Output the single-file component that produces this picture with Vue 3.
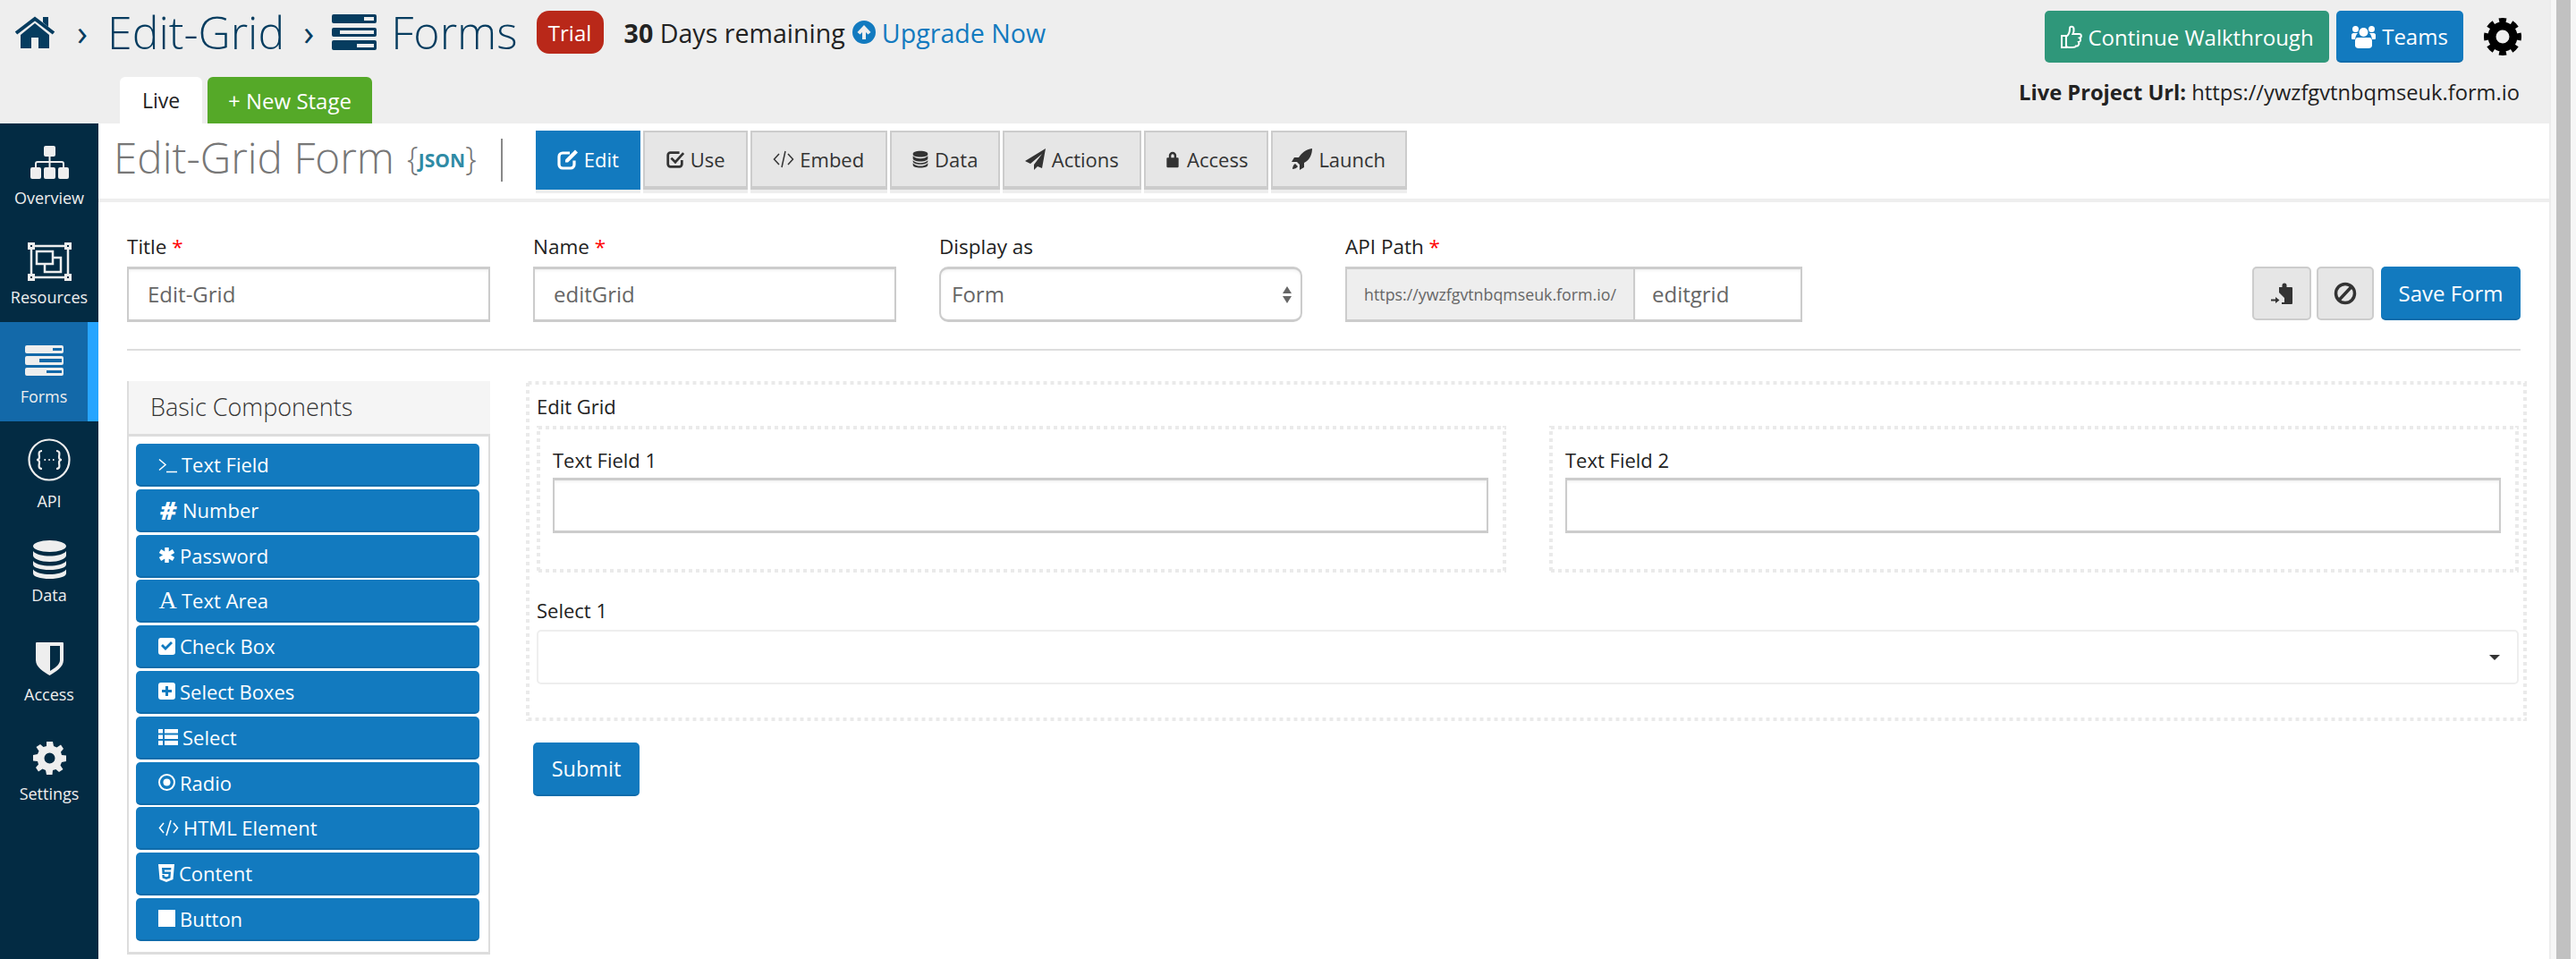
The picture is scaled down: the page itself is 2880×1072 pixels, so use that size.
<template>
  <div class="page">
    <div class="window">
      <header class="topbar">
        <div class="top-left">
          <div class="crumbs">
            <Icon name="home" :w="46" :h="36" />
            <span class="chev">›</span>
            <span class="crumb">Edit-Grid</span>
            <span class="chev second">›</span>
            <Icon name="server" :w="50" :h="40" />
            <span class="crumb forms">Forms</span>
            <span class="trial">Trial</span>
            <span class="remaining"><b>30</b> Days remaining</span>
            <Icon name="upcircle" :w="26" :h="26" class="up-icon" />
            <a class="upgrade">Upgrade Now</a>
          </div>
          <div class="stages">
            <span class="stage">Live</span>
            <span class="stage new">+ New Stage</span>
          </div>
        </div>
        <div class="top-right">
          <div class="top-actions">
            <button class="btn green"><Icon name="thumb" :w="25" :h="28" />Continue Walkthrough</button>
            <button class="btn blue teams"><Icon name="users" :w="27" :h="28" />Teams</button>
            <svg class="gear" viewBox="0 0 42 42" width="42" height="42">
              <circle cx="21" cy="21" r="12" fill="none" stroke="#000" stroke-width="9" />
              <circle cx="21" cy="21" r="18" fill="none" stroke="#000" stroke-width="6" pathLength="80" stroke-dasharray="5.5 4.5" transform="rotate(-12.4 21 21)" />
            </svg>
          </div>
          <div class="live-url"><b>Live Project Url:</b> https://ywzfgvtnbqmseuk.form.io</div>
        </div>
      </header>

      <div class="body">
        <nav class="sidebar">
          <a v-for="item in navItems" :key="item.label" class="nav-item" :class="{ active: item.label === 'Forms', api: item.label === 'API' }">
            <span class="nav-icon"><Icon :name="item.icon" :w="item.w" :h="item.h" /></span>
            <span class="nav-label">{{ item.label }}</span>
          </a>
        </nav>

        <main class="content">
          <div class="title-row">
            <h1 class="form-title">Edit-Grid Form</h1>
            <span class="json"><i>{</i>JSON<i>}</i></span>
            <span class="title-sep"></span>
            <div class="tabs">
              <a v-for="tab in tabs" :key="tab.label" class="tab" :class="{ active: tab.label === 'Edit' }">
                <Icon :name="tab.icon" :w="tab.w" :h="24" />{{ tab.label }}
              </a>
            </div>
          </div>

          <div class="settings">
            <div class="field">
              <label>Title <em>*</em></label>
              <div class="input">Edit-Grid</div>
            </div>
            <div class="field">
              <label>Name <em>*</em></label>
              <div class="input">editGrid</div>
            </div>
            <div class="field">
              <label>Display as</label>
              <div class="input select-native">
                Form
                <span class="updown"><i></i><i></i></span>
              </div>
            </div>
            <div class="field api-field">
              <label>API Path <em>*</em></label>
              <div class="input-group">
                <span class="addon">https://ywzfgvtnbqmseuk.form.io/</span>
                <span class="input">editgrid</span>
              </div>
            </div>
            <div class="settings-actions">
              <button class="btn grey first"><Icon name="clipin" :w="24" :h="24" /></button>
              <button class="btn grey second"><Icon name="ban" :w="26" :h="26" /></button>
              <button class="btn blue save">Save Form</button>
            </div>
          </div>

          <div class="builder">
            <aside class="panel">
              <div class="panel-head">Basic Components</div>
              <div class="panel-list">
                <a v-for="c in components" :key="c.label" class="comp">
                  <span v-if="c.glyph" class="glyph" :class="c.glyph">{{ c.text }}</span>
                  <Icon v-else :name="c.icon" :w="c.w || 19" :h="c.h || 19" />
                  {{ c.label }}
                </a>
              </div>
            </aside>

            <section class="canvas">
              <div class="dashed grid-box">
                <div class="lbl">Edit Grid</div>
                <div class="cols">
                  <div v-for="n in 2" :key="n" class="dashed col">
                    <div class="lbl">Text Field {{ n }}</div>
                    <div class="input blank"></div>
                  </div>
                </div>
                <div class="lbl select-lbl">Select 1</div>
                <div class="choice"><span class="caret"></span></div>
              </div>
              <button class="btn blue submit">Submit</button>
            </section>
          </div>
        </main>
      </div>
    </div>
    <div class="scrollbar"><span></span></div>
  </div>
</template>

<script setup>
import { h } from 'vue'

// icon shapes, f = filled path, s = stroked path
const shapes = {
  home: { vb: '0 0 46 36', f: 'M7 21 23 8 39 21V36H27V24H19V36H7ZM32 1h6v11l-6-5Z', s: 'M2 19 23 3 44 19', sw: 4 },
  server: { vb: '0 0 50 40', f: 'M2 0H48a2 2 0 0 1 2 2V8a2 2 0 0 1-2 2H2a2 2 0 0 1-2-2V2a2 2 0 0 1 2-2ZM36 3V7H47V3ZM2 15H48a2 2 0 0 1 2 2V23a2 2 0 0 1-2 2H2a2 2 0 0 1-2-2V17a2 2 0 0 1 2-2ZM9 18V22H47V18ZM2 29H48a2 2 0 0 1 2 2V38a2 2 0 0 1-2 2H2a2 2 0 0 1-2-2V31a2 2 0 0 1 2-2ZM28 33V37H47V33Z' },
  sitemap: { vb: '0 0 43 37', f: 'M17 0H26a2 2 0 0 1 2 2V10a2 2 0 0 1-2 2H17a2 2 0 0 1-2-2V2a2 2 0 0 1 2-2ZM2 24H10a2 2 0 0 1 2 2V35a2 2 0 0 1-2 2H2a2 2 0 0 1-2-2V26a2 2 0 0 1 2-2ZM17 24H26a2 2 0 0 1 2 2V35a2 2 0 0 1-2 2H17a2 2 0 0 1-2-2V26a2 2 0 0 1 2-2ZM33 24H41a2 2 0 0 1 2 2V35a2 2 0 0 1-2 2H33a2 2 0 0 1-2-2V26a2 2 0 0 1 2-2Z', s: 'M21.500 12V24M6 24V20a2 2 0 0 1 2-2H35a2 2 0 0 1 2 2V24', sw: 2 },
  resources: { vb: '0 0 49 43', f: 'M0 0H8V8H0ZM3 3V5H5V3ZM41 0H49V8H41ZM44 3V5H46V3ZM0 35H8V43H0ZM3 38V40H5V38ZM41 35H49V43H41ZM44 38V40H46V38Z', s: 'M8 4H41M4 8V35M45 8V35M8 39H41M10 10H28V24H10ZM28 17H37V33H19V24', sw: 2.500 },
  forms: { vb: '0 0 43 34', f: 'M2 0H41a2 2 0 0 1 2 2V7a2 2 0 0 1-2 2H2a2 2 0 0 1-2-2V2a2 2 0 0 1 2-2ZM31 3V6H41V3ZM2 12H41a2 2 0 0 1 2 2V20a2 2 0 0 1-2 2H2a2 2 0 0 1-2-2V14a2 2 0 0 1 2-2ZM16 15V19H41V15ZM2 25H41a2 2 0 0 1 2 2V32a2 2 0 0 1-2 2H2a2 2 0 0 1-2-2V27a2 2 0 0 1 2-2ZM24 28V31H41V28Z' },
  api: { vb: '0 0 48 48', s: 'M24 1.500a22.500 22.500 0 1 0 0 45a22.500 22.500 0 1 0 0-45ZM16 14c-5 0-3 5-3 7s-1 3-3 3c2 0 3 1 3 3s-2 7 3 7M32 14c5 0 3 5 3 7s1 3 3 3c-2 0-3 1-3 3s2 7-3 7M18.500 24h1.500M23.300 24h1.500M28 24h1.500', sw: 2.200 },
  data: { vb: '0 0 37 43', f: 'M18.500 0C29 0 37 3 37 6.500S29 13 18.500 13 0 10 0 6.500 8 0 18.500 0ZM0 12C3 16 11 17.500 18.500 17.500S34 16 37 12V17C37 20.500 29 24 18.500 24S0 20.500 0 17ZM0 23C3 27 11 28.500 18.500 28.500S34 27 37 23V27C37 30.500 29 33 18.500 33S0 30.500 0 27ZM0 32.500C3 36.500 11 38 18.500 38S34 36.500 37 32.500V37C37 40.500 29 43 18.500 43S0 40.500 0 37Z' },
  shield: { vb: '0 0 31 37', f: 'M1 0H30a1 1 0 0 1 1 1V20C31 28 22 33 15.500 37 9 33 0 28 0 20V1a1 1 0 0 1 1-1ZM16 4V32C21 29 27 25 27 20V4Z' },
  cog: { vb: '0 0 37 37', f: 'M15 0H22L23 5 26.500 6.500 31 3.500 34 8 31 11.500 32 15 37 15.500V22L32 23 30.500 26.500 33.500 31 29 34 25.500 31 22 32 21.500 37H15L14 32 10.500 30.500 6 33.500 3 29 6 25.500 5 22 0 21.500V15L5 14 6.500 10.500 3.500 6 8 3 11.500 6 15 5ZM18.500 12.500a6 6 0 1 0 0 12a6 6 0 1 0 0-12Z' },
  upcircle: { vb: '0 0 26 26', f: 'M13 0a13 13 0 1 1 0 26a13 13 0 1 1 0-26ZM13 5 5.500 13 8.500 15.500 11 13V21H15V13L17.500 15.500 20.500 13Z' },
  thumb: { vb: '0 0 25 28', s: 'M2 13H7V26H2ZM7 14C10 12 11 9 11 5 11 2 15 2 15.500 5 16 8 15 10 14.500 11H21.500C24.500 11 24.500 15 22 15.500 24 17 23 20 21 20 22 22 20.500 25 18 24.500 17.500 26 15 26 13 26H10C9 26 8 25.500 7 25', sw: 2 },
  users: { vb: '0 0 27 28', f: 'M13.500 5a5 5 0 1 1 0 10a5 5 0 1 1 0-10ZM4.500 3a3.500 3.500 0 1 1 0 7a3.500 3.500 0 1 1 0-7ZM22.500 3a3.500 3.500 0 1 1 0 7a3.500 3.500 0 1 1 0-7ZM7 16H20C22 16 23 18 23 20V25C23 27 21 28 19 28H8C6 28 4 27 4 25V20C4 18 5 16 7 16ZM2 11H7C5 13 4.500 15 4 18H1C0 18 0 17 0 16V13C0 12 1 11 2 11ZM20 11H25C26 11 27 12 27 13V16C27 17 27 18 26 18H23C22.500 15 22 13 20 11Z' },
  edit: { vb: '0 0 24 24', f: 'M9 12.500 20 1.500l3 3L12 15.500H9Z', s: 'M19 13.500V18a4 4 0 0 1-4 4H6a4 4 0 0 1-4-4V9A4 4 0 0 1 6 5H14', sw: 3.200 },
  check: { vb: '0 0 24 24', s: 'M20 13V18a3 3 0 0 1-3 3H6a3 3 0 0 1-3-3V7a3 3 0 0 1 3-3H17M7 10.500 12 15.500 22 4.500', sw: 3 },
  code: { vb: '0 0 24 24', s: 'M7 6 1.500 12 7 18M17 6l5.500 6L17 18M14 3 10 21', sw: 1.500 },
  database: { vb: '0 0 24 24', f: 'M12 1C18 1 22 2.500 22 5S18 9 12 9 2 7.500 2 5 6 1 12 1ZM2 7.500C4 10 8 11 12 11S20 10 22 7.500V11C22 13 18 15 12 15S2 13 2 11ZM2 13.500C4 16 8 17 12 17S20 16 22 13.500V15C22 17 18 19 12 19S2 17 2 15ZM2 17C4 20 8 21 12 21S20 20 22 17V19.500C22 22 18 23.500 12 23.500S2 22 2 19.500Z' },
  plane: { vb: '0 0 24 24', f: 'M23 0 0 14l6 3L19 6 10 18v6l4-4 5 2Z' },
  lock: { vb: '0 0 24 24', f: 'M5 10h14a1 1 0 0 1 1 1V22a1 1 0 0 1-1 1H5a1 1 0 0 1-1-1V11a1 1 0 0 1 1-1ZM7 10V7a5 5 0 0 1 10 0v3h-3V7a2 2 0 0 0-4 0v3Z' },
  rocket: { vb: '0 0 24 24', f: 'M23 0C16 1 11 5 8 10H3L0 15H6L9 18V24L14 21V16C20 13 23 7 23 0ZM4 17C2 18 1 21 1 23 3 23 6 22 7 20Z' },
  clipin: { vb: '0 0 24 24', f: 'M9 5H12.500V3a2.500 2.500 0 0 1 5 0V5H23a1 1 0 0 1 1 1V23a1 1 0 0 1-1 1H12V22H15V17L9 11ZM0 18.500H5V16L9.500 19.500 5 23V20.500H0Z' },
  ban: { vb: '0 0 26 26', s: 'M13 2.500a10.500 10.500 0 1 0 0 21a10.500 10.500 0 1 0 0-21ZM6 20.500 20 5.500', sw: 3.500 },
  terminal: { vb: '0 0 21 19', s: 'M1 3.500 8 9.500 1 15.500M9 17.500H21', sw: 1.500 },
  asterisk: { vb: '0 0 19 19', s: 'M9.500 1V18M2 5l15 9M17 5 2 14', sw: 4.500 },
  checkbox: { vb: '0 0 19 19', f: 'M3 0H16a3 3 0 0 1 3 3V16a3 3 0 0 1-3 3H3a3 3 0 0 1-3-3V3a3 3 0 0 1 3-3ZM8 14 16 6 14 4 8 10 5 7 3 9Z' },
  plusbox: { vb: '0 0 19 19', f: 'M3 0H16a3 3 0 0 1 3 3V16a3 3 0 0 1-3 3H3a3 3 0 0 1-3-3V3a3 3 0 0 1 3-3ZM8 4V8H4V11H8V15H11V11H15V8H11V4Z' },
  list: { vb: '0 0 22 18', f: 'M0 0H5V4.500H0ZM7 0H22V4.500H7ZM0 6.500H5V11H0ZM7 6.500H22V11H7ZM0 13H5V18H0ZM7 13H22V18H7Z' },
  radio: { vb: '0 0 19 19', f: 'M9.500 5.500a4 4 0 1 1 0 8a4 4 0 1 1 0-8Z', s: 'M9.500 1a8.500 8.500 0 1 0 0 17a8.500 8.500 0 1 0 0-17Z', sw: 2 },
  html: { vb: '0 0 18 20', f: 'M0 0H18L16.500 17 9 20 1.500 17ZM4 4 4.500 11H11.500L11.200 13.500 9 14.200 6.800 13.500 6.700 12H4.300L4.600 15.500 9 17 13.400 15.500 14 8.500H7L6.800 6.500H14.200L14.400 4Z' },
  stop: { vb: '0 0 19 19', f: 'M0 0H19V19H0Z' },
  tagcode: { vb: '0 0 23 19', s: 'M6 4 1.500 9.500 6 15M17 4l4.500 5.500L17 15M14 1 9 18', sw: 1.600 }
}

const Icon = (props) => {
  const s = shapes[props.name]
  const kids = []
  if (s.f) kids.push(h('path', { d: s.f, fill: 'currentColor', 'fill-rule': 'evenodd' }))
  if (s.s) kids.push(h('path', { d: s.s, fill: 'none', stroke: 'currentColor', 'stroke-width': s.sw }))
  return h('svg', { viewBox: s.vb, width: props.w, height: props.h, style: 'flex:none' }, kids)
}
Icon.props = ['name', 'w', 'h']

const navItems = [
  { label: 'Overview', icon: 'sitemap', w: 43, h: 37 },
  { label: 'Resources', icon: 'resources', w: 49, h: 43 },
  { label: 'Forms', icon: 'forms', w: 43, h: 34 },
  { label: 'API', icon: 'api', w: 48, h: 48 },
  { label: 'Data', icon: 'data', w: 37, h: 43 },
  { label: 'Access', icon: 'shield', w: 31, h: 37 },
  { label: 'Settings', icon: 'cog', w: 37, h: 37 }
]

const tabs = [
  { label: 'Edit', icon: 'edit', w: 24 },
  { label: 'Use', icon: 'check', w: 22 },
  { label: 'Embed', icon: 'code', w: 24 },
  { label: 'Data', icon: 'database', w: 20 },
  { label: 'Actions', icon: 'plane', w: 24 },
  { label: 'Access', icon: 'lock', w: 20 },
  { label: 'Launch', icon: 'rocket', w: 24 }
]

const components = [
  { label: 'Text Field', icon: 'terminal', w: 21 },
  { label: 'Number', glyph: 'hash', text: '#' },
  { label: 'Password', icon: 'asterisk' },
  { label: 'Text Area', glyph: 'serif', text: 'A' },
  { label: 'Check Box', icon: 'checkbox' },
  { label: 'Select Boxes', icon: 'plusbox' },
  { label: 'Select', icon: 'list', w: 22, h: 18 },
  { label: 'Radio', icon: 'radio' },
  { label: 'HTML Element', icon: 'tagcode', w: 23 },
  { label: 'Content', icon: 'html', w: 18, h: 20 },
  { label: 'Button', icon: 'stop' }
]
</script>

<style>
html, body { margin: 0; background: #fff; }
</style>

<style scoped>
.page {
  width: 2880px;
  height: 1072px;
  display: flex;
  overflow: hidden;
  font-family: "Open Sans", "Liberation Sans", sans-serif;
  color: #222;
}
.window {
  width: 2850px;
  display: flex;
  flex-direction: column;
}
.scrollbar {
  width: 30px;
  box-sizing: border-box;
  background: #f6f6f6;
  border-left: 2px solid #ececec;
  padding-left: 6px;
}
.scrollbar span {
  display: block;
  width: 16px;
  height: 100%;
  background: #c1c1c1;
}

.topbar {
  height: 138px;
  background: #eee;
  display: flex;
  justify-content: space-between;
  flex: none;
}
.top-left {
  display: flex;
  flex-direction: column;
}
.crumbs {
  height: 86px;
  padding-left: 16px;
  box-sizing: border-box;
  padding-bottom: 14px;
  display: flex;
  align-items: center;
  color: #063c5f;
}
.chev {
  font-size: 40px;
  margin: 0 22px 0 24px;
  line-height: 1;
}
.chev.second {
  margin: 0 20px 0 21px;
}
.crumb {
  font-size: 50px;
  font-weight: 350;
}
.crumb.forms {
  margin-left: 16px;
}
.trial {
  margin-left: 21px;
  width: 75px;
  height: 48px;
  background: #b92819;
  color: #fff;
  border-radius: 14px;
  font-size: 24px;
  font-weight: 500;
  display: flex;
  align-items: center;
  justify-content: center;
}
.remaining {
  margin-left: 23px;
  font-size: 28.600px;
  color: #222;
}
.up-icon {
  margin-left: 8px;
  color: #127abf;
}
.upgrade {
  margin-left: 7px;
  font-size: 28.600px;
  color: #127abf;
}
.stages {
  margin-left: 134px;
  display: flex;
  gap: 6px;
  height: 52px;
}
.stage {
  width: 92px;
  background: #fff;
  border-radius: 6px 6px 0 0;
  font-size: 23px;
  display: flex;
  align-items: center;
  justify-content: center;
  color: #222;
}
.stage.new {
  width: 184px;
  background: #55a928;
  color: #fff;
  font-size: 24px;
  font-weight: 500;
}

.top-right {
  padding: 12px 31px 0 0;
  display: flex;
  flex-direction: column;
  align-items: flex-end;
}
.top-actions {
  display: flex;
  align-items: center;
}
.btn {
  font-family: inherit;
  height: 58px;
  border: 0;
  border-radius: 5px;
  color: #fff;
  display: flex;
  align-items: center;
  justify-content: center;
  font-size: 24px;
  font-weight: 500;
  padding: 0;
}
.green {
  width: 318px;
  background: #2f977a;
  gap: 6px;
}
.blue {
  background: #127abf;
  border-bottom: 2px solid #0f6cab;
}
.teams {
  width: 142px;
  margin-left: 8px;
  gap: 7px;
}
.gear {
  margin-left: 23px;
}
.live-url {
  margin-top: 16px;
  margin-right: 2px;
  font-size: 23.700px;
  line-height: 34px;
  color: #222;
}

.body {
  flex: 1;
  display: flex;
  min-height: 0;
}
.sidebar {
  width: 110px;
  flex: none;
  background: #032b43;
}
.nav-item {
  display: flex;
  flex-direction: column;
  align-items: center;
  height: 111px;
  box-sizing: border-box;
  padding-top: 20px;
  color: #eee;
}
.nav-item.active {
  background: #1369a9;
  border-right: 12px solid #27a5ff;
}
.nav-icon {
  height: 46px;
  display: flex;
  align-items: center;
}
.nav-label {
  margin-top: 5px;
  font-size: 18px;
  line-height: 24px;
  font-weight: 500;
}
.nav-item.api .nav-label {
  margin-top: 11px;
}

.content {
  flex: 1;
  min-width: 0;
}
.title-row {
  height: 84px;
  display: flex;
  border-bottom: 4px solid #eee;
  padding-left: 17px;
}
.form-title {
  margin: 6px 0 0;
  font-size: 47.700px;
  line-height: 64px;
  font-weight: 300;
  color: #777;
}
.json {
  margin: 17px 0 0 14px;
  font-size: 21px;
  line-height: 44px;
  font-weight: 700;
  color: #2f8ba5;
}
.json i {
  font-style: normal;
  font-weight: 300;
  font-size: 36px;
  color: #777;
  vertical-align: -3px;
}
.title-sep {
  width: 2px;
  height: 48px;
  margin: 17px 0 0 27px;
  background: #888;
}
.tabs {
  margin: 8px 0 0 37px;
  display: grid;
  grid-template-columns: 117px 117px 153px 123px 155px 139px 152px;
  gap: 3px;
  height: 70px;
}
.tab {
  height: 66px;
  box-sizing: border-box;
  background: #e6e6e6;
  border: 2px solid #ccc;
  border-bottom-width: 4px;
  box-shadow: 0 4px 0 #eee;
  font-size: 22px;
  color: #333;
  display: flex;
  align-items: center;
  justify-content: center;
  gap: 6px;
}
.tab.active {
  background: #127abf;
  border-color: #127abf;
  color: #fff;
  font-weight: 500;
}

.settings {
  margin: 0 32px 0 32px;
  padding: 35px 0 30px;
  border-bottom: 2px solid #ddd;
  display: flex;
  gap: 48px;
}
.field {
  width: 406px;
}
.api-field {
  width: 511px;
}
.field label {
  display: block;
  font-size: 22.500px;
  line-height: 30px;
  margin-bottom: 7px;
  color: #222;
}
.field em {
  color: #f00;
  font-style: normal;
}
.input {
  height: 62px;
  box-sizing: border-box;
  border: 3px solid #ccc;
  border-width: 3px 2px;
  background: #fff;
  padding: 0 21px;
  font-size: 24px;
  line-height: 56px;
  color: #666;
  box-shadow: inset 0 2px 3px rgba(0, 0, 0, 0.05);
}
.select-native {
  border-radius: 10px;
  display: flex;
  align-items: center;
  justify-content: space-between;
  padding: 0 10px 0 12px;
}
.updown {
  display: flex;
  flex-direction: column;
  gap: 3px;
}
.updown i {
  width: 0;
  height: 0;
  border: 5px solid transparent;
  border-bottom: 8px solid #666;
  border-top: 0;
}
.updown i + i {
  border-bottom: 0;
  border-top: 8px solid #666;
}
.input-group {
  display: flex;
  height: 62px;
}
.addon {
  width: 324px;
  box-sizing: border-box;
  background: #eee;
  border: 3px solid #ccc;
  border-width: 3px 2px;
  font-size: 17.800px;
  color: #666;
  display: flex;
  align-items: center;
  justify-content: center;
}
.input-group .input {
  flex: 1;
  border-left: 0;
  padding-left: 19px;
}
.settings-actions {
  margin-left: auto;
  align-self: flex-end;
  display: flex;
  padding-bottom: 2px;
}
.grey {
  height: 60px;
  background: #e6e6e6;
  border: 2px solid #ccc;
  box-sizing: border-box;
  color: #333;
}
.grey.first {
  width: 66px;
}
.grey.second {
  width: 64px;
  margin: 0 8px 0 6px;
}
.save {
  width: 156px;
  height: 60px;
}

.builder {
  display: flex;
  padding: 34px 25px 0 32px;
  gap: 40px;
  align-items: flex-start;
}
.panel {
  width: 406px;
  flex: none;
}
.panel-head {
  height: 59px;
  background: #f5f5f5;
  border-left: 2px solid #ddd;
  border-bottom: 3px solid #ddd;
  padding-left: 24px;
  font-size: 27px;
  font-weight: 300;
  line-height: 58px;
  color: #333;
}
.panel-list {
  border: 2px solid #ddd;
  border-width: 0 2px 3px;
  padding: 8px 10px 12px 8px;
  display: flex;
  flex-direction: column;
  gap: 2.800px;
}
.comp {
  height: 48px;
  box-sizing: border-box;
  background: #127abf;
  border-bottom: 2px solid #0f6cab;
  border-radius: 5px;
  padding-left: 25px;
  color: #fff;
  font-size: 22px;
  font-weight: 500;
  display: flex;
  align-items: center;
  gap: 5px;
}
.glyph {
  line-height: 1;
}
.glyph.hash {
  font-weight: 800;
  font-style: italic;
  font-size: 28px;
  width: 22px;
  text-align: center;
}
.glyph.serif {
  font-family: "Liberation Serif", serif;
  font-size: 28px;
  width: 21px;
  text-align: center;
}

.canvas {
  flex: 1;
  min-width: 0;
}
.dashed {
  box-sizing: border-box;
  background-image:
    linear-gradient(to right, #eaeaea 50%, transparent 0),
    linear-gradient(to right, #eaeaea 50%, transparent 0),
    linear-gradient(to bottom, #eaeaea 50%, transparent 0),
    linear-gradient(to bottom, #eaeaea 50%, transparent 0);
  background-size: 8px 4px, 8px 4px, 4px 8px, 4px 8px;
  background-repeat: repeat-x, repeat-x, repeat-y, repeat-y;
  background-position: top, bottom, left, right;
}
.grid-box {
  height: 380px;
  padding: 13px 9px 0 12px;
}
.lbl {
  font-size: 22px;
  line-height: 30px;
  color: #222;
}
.cols {
  margin-top: 7px;
  display: grid;
  grid-template-columns: 1fr 1fr;
  gap: 48px;
}
.col {
  height: 164px;
  padding: 23px 20px 0 18px;
}
.col .lbl {
  margin-bottom: 5px;
}
.blank {
  padding: 0;
}
.select-lbl {
  margin-top: 27px;
}
.choice {
  margin-top: 7px;
  height: 61px;
  box-sizing: border-box;
  border: 2px solid #eee;
  border-radius: 5px;
  display: flex;
  align-items: center;
  justify-content: flex-end;
  padding-right: 19px;
}
.caret {
  width: 0;
  height: 0;
  border: 6px solid transparent;
  border-top: 6px solid #333;
  border-bottom: 0;
}
.submit {
  margin: 24px 0 0 8px;
  width: 119px;
  height: 60px;
  font-size: 23.500px;
}
</style>
